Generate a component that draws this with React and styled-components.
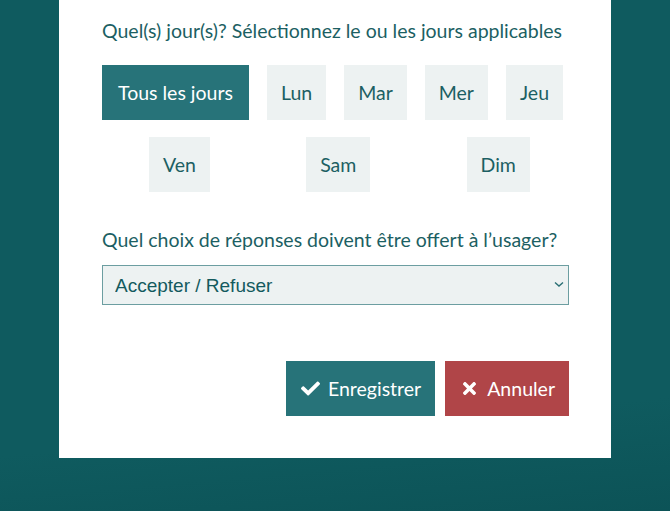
import React from "react"
import styled, { createGlobalStyle } from "styled-components"
import { FaCheck, FaTimes } from "react-icons/fa"

const GlobalStyle = createGlobalStyle`
  html, body {
    margin: 0;
    padding: 0;
    background: #0f5a5e;
  }
  body {
    font-family: "Lato", "Noto Sans", sans-serif;
    background: linear-gradient(175deg, #0f5b5f 80%, #0c5357 100%);
    min-height: 511px;
  }
`

const Page = styled.div`
  padding: 0 59px;
`

const Card = styled.div`
  box-sizing: border-box;
  width: 552px;
  height: 458px;
  background: #fff;
  padding: 19px 42px 0 43px;
  display: flex;
  flex-direction: column;
`

const Question = styled.p`
  margin: 0;
  font-size: 19.5px;
  line-height: 24px;
  color: #1c5f63;
`

const Days = styled.div`
  display: flex;
  flex-direction: column;
  gap: 17px;
  margin: 22px 0 36px;
`

const DayRow = styled.div`
  display: flex;
  gap: 18px;
  justify-content: ${p => (p.spread ? "space-around" : "flex-start")};
  padding: ${p => (p.spread ? "0 0 0 8px" : "0")};
`

const Day = styled.button`
  border: none;
  height: 55px;
  padding: 0 ${p => (p.active ? "16px" : "14px")};
  font-family: inherit;
  font-size: 19.5px;
  background: ${p => (p.active ? "#277379" : "#edf2f2")};
  color: ${p => (p.active ? "#fff" : "#1c5f63")};
  cursor: pointer;
`

const SelectBox = styled.div`
  position: relative;
  margin-top: 13px;
`

const Select = styled.select`
  box-sizing: border-box;
  width: 100%;
  height: 40px;
  appearance: none;
  background: #edf2f2;
  border: 1.5px solid #6c9ea1;
  border-radius: 0;
  padding: 0 12px;
  font-family: "Liberation Sans", Arial, sans-serif;
  font-size: 19px;
  color: #135a5e;
`

const Chevron = styled.svg`
  position: absolute;
  right: 5px;
  top: 16px;
  pointer-events: none;
`

const Actions = styled.div`
  display: flex;
  justify-content: flex-end;
  gap: 10px;
  margin-top: 56px;
`

const ActionButton = styled.button`
  display: flex;
  align-items: center;
  gap: 8px;
  height: 55px;
  border: none;
  padding: 0 14px 0 15px;
  font-family: inherit;
  font-size: 19.5px;
  color: #fff;
  background: ${p => (p.danger ? "#b04548" : "#277379")};
  cursor: pointer;

  svg {
    font-size: 19px;
  }
`

const weekdays = ["Lun", "Mar", "Mer", "Jeu"]
const weekend = ["Ven", "Sam", "Dim"]

export default function App() {
  return (
    <>
      <GlobalStyle />
      <Page>
        <Card>
          <Question>Quel(s) jour(s)? Sélectionnez le ou les jours applicables</Question>
          <Days>
            <DayRow>
              <Day active>Tous les jours</Day>
              {weekdays.map(d => (
                <Day key={d}>{d}</Day>
              ))}
            </DayRow>
            <DayRow spread>
              {weekend.map(d => (
                <Day key={d}>{d}</Day>
              ))}
            </DayRow>
          </Days>
          <Question>Quel choix de réponses doivent être offert à l’usager?</Question>
          <SelectBox>
            <Select defaultValue="ar">
              <option value="ar">Accepter / Refuser</option>
            </Select>
            <Chevron width="10" height="7" viewBox="0 0 10 7">
              <path d="M1 1.5 L5 5 L9 1.5" fill="none" stroke="#2a6f74" strokeWidth="1.4" />
            </Chevron>
          </SelectBox>
          <Actions>
            <ActionButton>
              <FaCheck />
              Enregistrer
            </ActionButton>
            <ActionButton danger>
              <FaTimes />
              Annuler
            </ActionButton>
          </Actions>
        </Card>
      </Page>
    </>
  )
}
